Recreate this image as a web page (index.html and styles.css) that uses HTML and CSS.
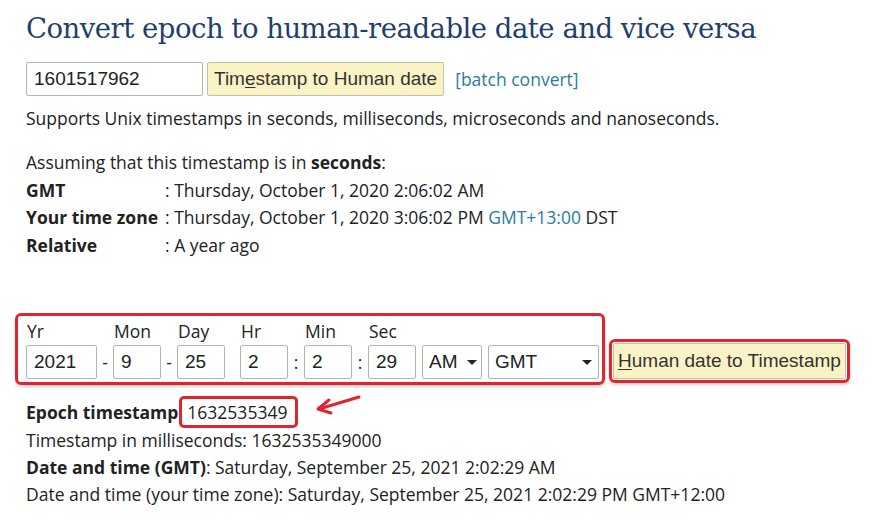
FILE: index.html
```html
<!DOCTYPE html>
<html lang="en">
<head>
    <meta charset="UTF-8">
    <meta name="viewport" content="width=device-width, initial-scale=1.0">
    <title>Epoch Converter</title>
    <link rel="stylesheet" href="styles.css">
</head>
<body>
    <div class="page">
        <h1>Convert epoch to human-readable date and vice versa</h1>

        <form class="ts-form">
            <input type="text" class="ts-input" value="1601517962">
            <button type="button" class="btn">Tim<u>e</u>stamp to Human date</button>
            <a href="#" class="batch">[batch convert]</a>
        </form>
        <p class="note">Supports Unix timestamps in seconds, milliseconds, microseconds and nanoseconds.</p>

        <div class="result">
            <p>Assuming that this timestamp is in <b>seconds</b>:</p>
            <div class="row"><b class="key">GMT</b><span>: Thursday, October 1, 2020 2:06:02 AM</span></div>
            <div class="row"><b class="key">Your time zone</b><span>: Thursday, October 1, 2020 3:06:02 PM <a href="#" class="tz">GMT+13:00</a> DST</span></div>
            <div class="row"><b class="key">Relative</b><span>: A year ago</span></div>
        </div>

        <form class="date-form">
            <div class="date-box">
                <div class="field"><label>Yr</label><input type="text" class="in-yr" value="2021"></div>
                <span class="sep">-</span>
                <div class="field"><label>Mon</label><input type="text" class="in-sm" value="9"></div>
                <span class="sep">-</span>
                <div class="field"><label>Day</label><input type="text" class="in-sm" value="25"></div>
                <span class="gap"></span>
                <div class="field"><label>Hr</label><input type="text" class="in-sm" value="2"></div>
                <span class="sep">:</span>
                <div class="field"><label>Min</label><input type="text" class="in-sm" value="2"></div>
                <span class="sep">:</span>
                <div class="field"><label>Sec</label><input type="text" class="in-sm" value="29"></div>
                <div class="field"><label>&nbsp;</label><div class="select sel-ampm">AM<span class="caret"></span></div></div>
                <div class="field"><label>&nbsp;</label><div class="select sel-tz">GMT<span class="caret"></span></div></div>
            </div>
            <div class="btn-box">
                <button type="button" class="btn btn-big"><u>H</u>uman date to Timestamp</button>
            </div>
        </form>

        <div class="output">
            <div class="epoch-line">
                <b>Epoch timestamp</b>
                <span class="epoch-val">1632535349</span>
                <svg class="arrow" width="50" height="22" viewBox="0 0 50 22">
                    <path d="M46 3 L6 15" fill="none" stroke="#e2242f" stroke-width="3" stroke-linecap="round"/>
                    <path d="M16 6 L5 15 L18 19" fill="none" stroke="#e2242f" stroke-width="3" stroke-linecap="round" stroke-linejoin="round"/>
                </svg>
            </div>
            <p>Timestamp in milliseconds: 1632535349000</p>
            <p><b>Date and time (GMT)</b>: Saturday, September 25, 2021 2:02:29 AM</p>
            <p>Date and time (your time zone): Saturday, September 25, 2021 2:02:29 PM GMT+12:00</p>
        </div>
    </div>
</body>
</html>
```

FILE: styles.css
```css
* {
    margin: 0;
    padding: 0;
    box-sizing: border-box;
}

body {
    background: #fff;
    color: #222;
    font-family: 'Open Sans', sans-serif;
    font-size: 17.5px;
}

.page {
    padding: 9px 0 0 26px;
}

h1 {
    font-family: 'DejaVu Serif', serif;
    font-weight: normal;
    font-size: 27.5px;
    color: #1f3f6d;
    line-height: 38px;
    letter-spacing: -0.5px;
}

.ts-form {
    display: flex;
    align-items: center;
    margin-top: 15px;
}

input, .select, .btn {
    font-family: 'Liberation Sans', Arial, sans-serif;
    font-size: 19px;
    color: #222;
}

input {
    height: 34px;
    border: 1px solid #b4b4b4;
    border-radius: 2px;
    padding: 0 7px;
    outline: none;
}

.ts-input {
    width: 177px;
}

.btn {
    height: 34px;
    margin-left: 4px;
    padding: 0 6px;
    background: #fbf3c6;
    border: 1px solid #c9c2a0;
    border-radius: 2px;
    color: #333;
}

.btn u {
    text-underline-offset: 2px;
}

.batch {
    margin-left: 11px;
    color: #2b7c9d;
    text-decoration: none;
}

.note {
    margin-top: 9px;
    line-height: 27px;
}

.result {
    margin-top: 17px;
    line-height: 27.5px;
}

.row {
    display: flex;
}

.key {
    width: 139px;
}

.tz {
    color: #2b7c9d;
    text-decoration: none;
}

.date-form {
    display: flex;
    align-items: flex-end;
    margin: 54px 0 0 -11px;
}

.date-box {
    display: flex;
    align-items: flex-end;
    padding: 2px 3px 3px 8px;
    border: 3px solid #e2242f;
    border-radius: 6px;
    box-shadow: 0 2px 3px rgba(0, 0, 0, 0.18);
}

.field {
    display: flex;
    flex-direction: column;
}

.field label {
    line-height: 27px;
    padding-left: 1px;
}

.in-yr {
    width: 71px;
}

.in-sm {
    width: 48px;
}

.sep {
    width: 16px;
    height: 34px;
    line-height: 34px;
    text-align: center;
}

.gap {
    width: 15px;
}

.select {
    display: flex;
    align-items: center;
    justify-content: space-between;
    height: 34px;
    margin-left: 6px;
    padding: 0 6px;
    border: 1px solid #b4b4b4;
    border-radius: 2px;
    background: #fff;
}

.sel-ampm {
    width: 60px;
    padding-right: 4px;
}

.sel-tz {
    width: 111px;
}

.caret {
    width: 0;
    height: 0;
    border-left: 5px solid transparent;
    border-right: 5px solid transparent;
    border-top: 5px solid #222;
    margin-left: 2px;
}

.btn-box {
    margin: 0 0 2px 4px;
    padding: 1px;
    border: 3px solid #e2242f;
    border-radius: 6px;
    box-shadow: 0 2px 3px rgba(0, 0, 0, 0.18);
}

.btn-big {
    display: block;
    height: 36px;
    margin: 0;
    padding: 0 4px;
}

.output {
    margin-top: 12px;
    line-height: 27px;
}

.epoch-line {
    display: flex;
    align-items: center;
    height: 30px;
}

.epoch-val {
    margin-left: 1px;
    padding: 0 8px 0 5px;
    border: 3px solid #e2242f;
    border-radius: 5px;
    line-height: 26px;
}

.arrow {
    margin-left: 15px;
    margin-top: -14px;
}
```
